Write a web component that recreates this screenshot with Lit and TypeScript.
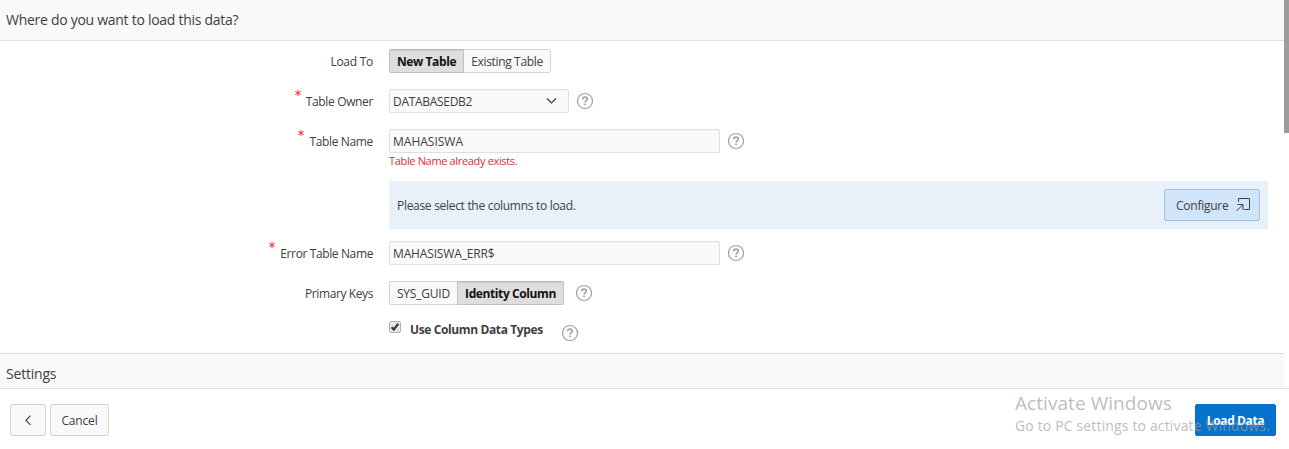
import { LitElement, html, css, svg } from "lit";
import { customElement } from "lit/decorators.js";

const help = html`<svg class="help" width="18" height="18" viewBox="0 0 18 18" fill="none">
  <circle cx="9" cy="9" r="7.5" stroke="#a0a0a0" stroke-width="1.2"></circle>
  <path d="M6.7 7.3C6.7 5.9 7.7 5.1 9 5.1s2.300.8 2.300 2c0 1.600-2.200 1.600-2.200 3.500" stroke="#a0a0a0" stroke-width="1.6"></path>
  <rect x="8.2" y="11.6" width="1.7" height="1.6" fill="#a0a0a0"></rect>
</svg>`;

const star = html`<svg class="star" width="6" height="6" viewBox="0 0 6 6">
  ${svg`<path d="M3 0v6M0.3 1.400l5.400 3.200M5.700 1.400L0.300 4.600" stroke="#ff2a2a" stroke-width="1"></path>`}
</svg>`;

@customElement("app-root")
export class AppRoot extends LitElement {
  static styles = css`
    :host {
      display: block;
      position: relative;
      height: 449px;
      overflow: hidden;
      background: #fff;
      color: #404040;
      font: 12px/16px "Open Sans", "Noto Sans", sans-serif;
      white-space: nowrap;
    }
    * { box-sizing: border-box; }
    svg { display: block; flex: none; }
    .heading {
      width: 1284px;
      background: #f9f9f9;
      color: #404040;
      font-size: 14px;
      line-height: 20px;
      padding-left: 6px;
    }
    .top { height: 41px; padding-top: 10px; border-bottom: 1px solid #dfdfdf; }
    .settings { height: 35px; padding-top: 10px; border-top: 1px solid #dfdfdf; }
    .form { height: 312px; padding-top: 8px; }
    .row { display: flex; height: 24px; margin-bottom: 16px; }
    .row.tight { margin-bottom: 0; }
    .label {
      width: 373px;
      margin-right: 16px;
      display: flex;
      justify-content: flex-end;
      padding-top: 5px;
    }
    .star { margin: -4px 5px 0 0; }
    .help { margin: 3px 0 0 7px; }
    .group { display: flex; }
    .group + .help { margin-left: 11px; }
    .seg {
      height: 24px;
      border: 1px solid #d4d4d4;
      background: #f9f9f9;
      padding: 4px 0 0;
      text-align: center;
    }
    .seg:first-child { border-radius: 2px 0 0 2px; }
    .seg:last-child { border-radius: 0 2px 2px 0; }
    .seg.on {
      background: #dedede;
      border-color: #bbb #c2c2c2 #c2c2c2;
      color: #111;
      font-weight: 700;
      box-shadow: inset 0 1px 1px rgba(0, 0, 0, 0.08);
    }
    .w75 { width: 75px; }
    .w87 { width: 87px; border-left: 0; }
    .w68 { width: 68px; border-right: 0; }
    .w107 { width: 107px; }
    .field {
      height: 24px;
      width: 331px;
      border: 1px solid #dfdfdf;
      border-radius: 2px;
      background: #f9f9f9;
      box-shadow: inset 0 1px 1px rgba(0, 0, 0, 0.03);
      padding: 4px 11px 0 3px;
      display: flex;
      justify-content: space-between;
    }
    .select { width: 180px; }
    .chev { margin-top: 3px; }
    .error { margin-left: 389px; height: 28px; font-size: 11px; line-height: 16px; color: #e32b35; }
    .panel {
      margin: 0 0 12px 389px;
      width: 879px;
      height: 48px;
      padding: 8px;
      background: #e8f0fa;
      display: flex;
      justify-content: space-between;
    }
    .panel .t10 { margin-top: 9px; }
    .configure {
      width: 96px;
      height: 32px;
      display: flex;
      padding: 8px 8px 0 11px;
      justify-content: space-between;
      border: 1px solid #a9bfd6;
      border-radius: 2px;
      background: #d0e5fa;
    }
    .configure svg { margin-top: -1px; }
    .check {
      display: flex;
      margin-left: 389px;
    }
    .checklabel { font-weight: 700; margin: 1px 0 0 9px; width: 133px; }
    .check .help { margin: 3px 0 0 18px; }
    .footer {
      height: 61px;
      border-top: 1px solid #dfdfdf;
      padding: 15px 13px 0 10px;
      display: flex;
      background: #fff;
    }
    .btn {
      height: 32px;
      border: 1px solid #d4d4d4;
      border-radius: 2px;
      background: #f9f9f9;
      text-align: center;
      padding-top: 8px;
    }
    .back { width: 36px; margin-right: 4px; padding: 10px 0 0 13px; }
    .cancel { width: 59px; }
    .load { width: 81px; margin-left: auto; background: #0572ce; border-color: #0572ce; color: #fff; font-weight: 700; }
    .scroll { position: absolute; right: 0; top: 0; width: 5px; height: 133px; background: #9c9c9c; }
    .mark { position: absolute; left: 1015px; top: 391px; color: rgba(160, 160, 160, 0.7); }
    .mark1 { font-size: 19px; line-height: 24px; }
    .mark2 { font-size: 14px; line-height: 22px; }
    .t1 { letter-spacing: -0.28px; }
    .t2 { letter-spacing: -0.26px; }
    .t3 { letter-spacing: -0.4px; }
    .t4 { letter-spacing: -0.34px; }
    .t5 { letter-spacing: -0.36px; }
    .t6 { letter-spacing: -0.3px; }
    .t7 { letter-spacing: -0.35px; }
    .t9 { letter-spacing: -0.34px; }
    .t10 { letter-spacing: -0.3px; }
    .t11 { letter-spacing: -0.25px; }
    .t12 { letter-spacing: -0.38px; }
    .t13 { letter-spacing: -0.15px; }
    .t14 { letter-spacing: -0.4px; }
    .t15 { letter-spacing: -0.2px; }
    .t16 { letter-spacing: -0.4px; }
    .t17 { letter-spacing: -0.38px; }
    .t18 { letter-spacing: -0.2px; }
    .t19 { letter-spacing: -0.15px; }
    .t20 { letter-spacing: -0.38px; }
    .t21 { letter-spacing: 0.06px; }
    .t22 { letter-spacing: 0.15px; }
  `;

  render() {
    return html`
      <div class="heading top"><span class="t1">Where do you want to load this data?</span></div>
      <div class="form">
        <div class="row">
          <div class="label"><span class="t2">Load To</span></div>
          <div class="group">
            <div class="seg on w75"><span class="t3">New Table</span></div>
            <div class="seg w87"><span class="t4">Existing Table</span></div>
          </div>
        </div>
        <div class="row">
          <div class="label">${star}<span class="t5">Table Owner</span></div>
          <div class="field select">
            <span class="t6">DATABASEDB2</span>
            <svg class="chev" width="11" height="8" viewBox="0 0 11 8" fill="none"><path d="M1 1.5L5.5 6 10 1.5" stroke="#404040" stroke-width="1.2"></path></svg>
          </div>
          ${help}
        </div>
        <div class="row tight">
          <div class="label">${star}<span class="t7">Table Name</span></div>
          <div class="field"><span class="t8">MAHASISWA</span></div>
          ${help}
        </div>
        <div class="error"><span class="t9">Table Name already exists.</span></div>
        <div class="panel">
          <span class="t10">Please select the columns to load.</span>
          <div class="configure">
            <span class="t11">Configure</span>
            <svg width="15" height="15" viewBox="0 0 15 15" fill="none" stroke="#404040">
              <path d="M2.500 5V1.500h11v11H8.500M0.500 14l6-6M1.500 7.500H7V13"></path>
            </svg>
          </div>
        </div>
        <div class="row">
          <div class="label">${star}<span class="t12">Error Table Name</span></div>
          <div class="field"><span class="t13">MAHASISWA_ERR$</span></div>
          ${help}
        </div>
        <div class="row">
          <div class="label"><span class="t14">Primary Keys</span></div>
          <div class="group">
            <div class="seg w68"><span class="t15">SYS_GUID</span></div>
            <div class="seg on w107"><span class="t16">Identity Column</span></div>
          </div>
          ${help}
        </div>
        <div class="check">
          <svg class="box" width="12" height="12" viewBox="0 0 12 12" fill="none">
            <rect x=".5" y=".5" width="11" height="11" rx="1.5" fill="#e6e6e6" stroke="#b0b0b0"></rect>
            <path d="M2.6 6.200l2.200 2.300L9.300 2.800" stroke="#3a3a3a" stroke-width="2.2"></path>
          </svg>
          <div class="checklabel"><span class="t17">Use Column Data Types</span></div>
          ${help}
        </div>
      </div>
      <div class="heading settings"><span class="t18">Settings</span></div>
      <div class="footer">
        <div class="btn back">
          <svg width="8" height="11" viewBox="0 0 8 11" fill="none"><path d="M6.500.7L2 5.300l4.500 4.500" stroke="#404040" stroke-width="1.2"></path></svg>
        </div>
        <div class="btn cancel"><span class="t19">Cancel</span></div>
        <div class="btn load"><span class="t20">Load Data</span></div>
      </div>
      <div class="mark">
        <div class="mark1"><span class="t21">Activate Windows</span></div>
        <div class="mark2"><span class="t22">Go to PC settings to activate Windows.</span></div>
      </div>
      <div class="scroll"></div>
    `;
  }
}
